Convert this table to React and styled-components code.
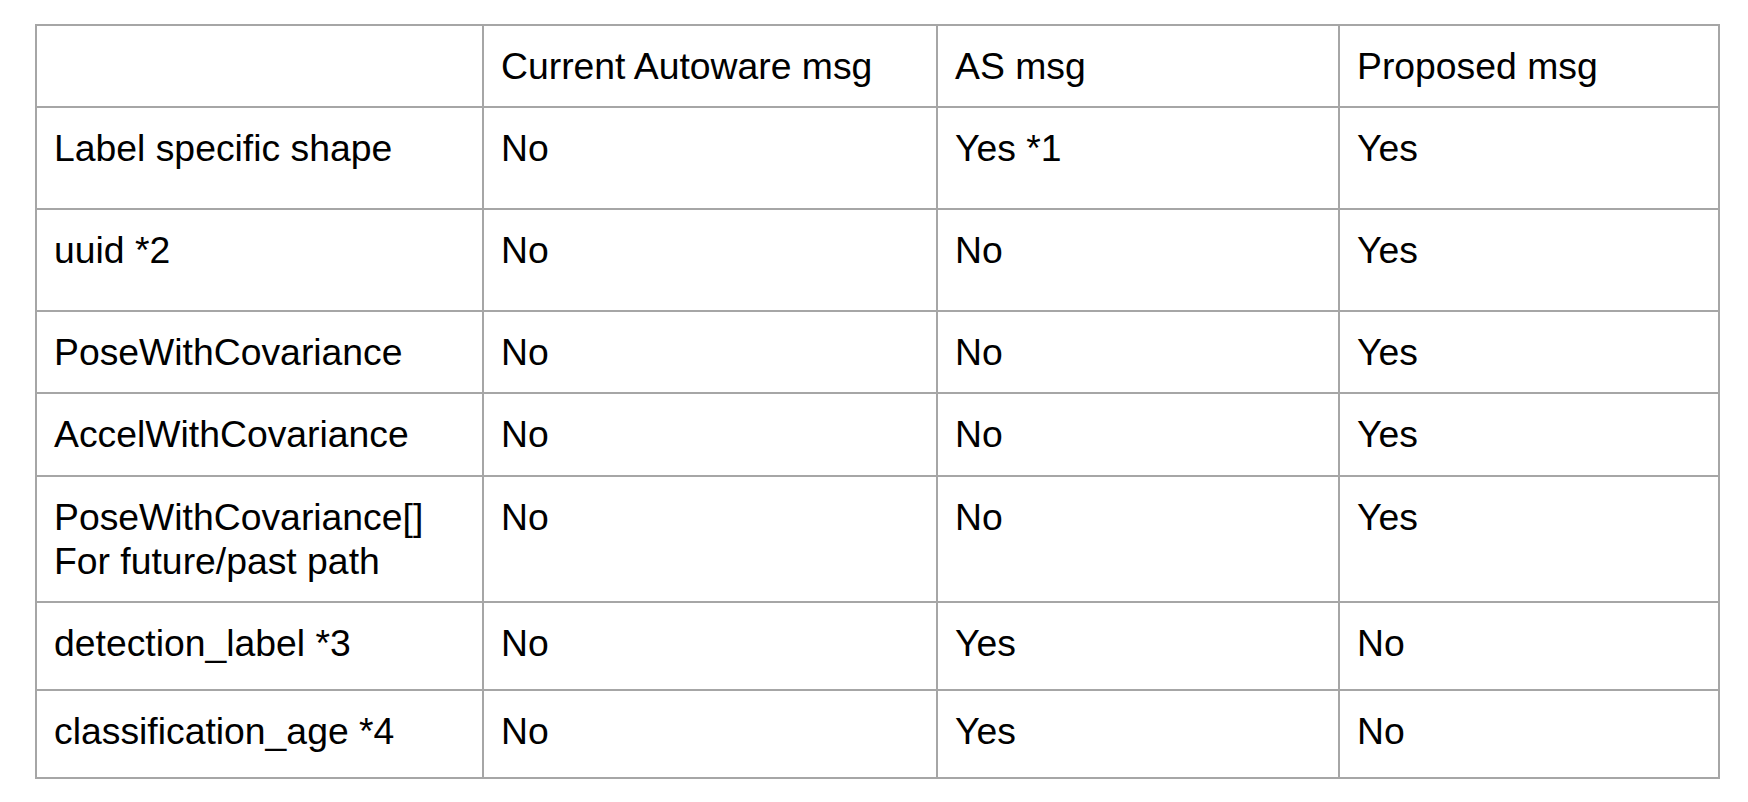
import React from "react";
import styled, { createGlobalStyle } from "styled-components";

const Global = createGlobalStyle`
  html, body { margin: 0; padding: 0; background: #ffffff; }
  body { font-family: "Liberation Sans", Arial, sans-serif; color: #000; }
`;

const Page = styled.div`
  padding: 24px 0 0 35px;
`;

const Table = styled.div`
  display: grid;
  grid-template-columns: 447px 454px 402px 380px;
  width: max-content;
  border-top: 2px solid #a6a6a6;
  border-left: 2px solid #a6a6a6;
`;

const Cell = styled.div`
  box-sizing: border-box;
  height: ${(p) => p.$h}px;
  padding: 18px 10px 0 17px;
  border-right: 2px solid #a6a6a6;
  border-bottom: 2px solid #a6a6a6;
  font-size: 37.33px;
  line-height: 44px;
  white-space: pre-line;
`;

const rows = [
  { h: 82, cells: ["", "Current Autoware msg", "AS msg", "Proposed msg"] },
  { h: 102, cells: ["Label specific shape", "No", "Yes *1", "Yes"] },
  { h: 102, cells: ["uuid *2", "No", "No", "Yes"] },
  { h: 82, cells: ["PoseWithCovariance", "No", "No", "Yes"] },
  { h: 83, cells: ["AccelWithCovariance", "No", "No", "Yes"] },
  { h: 126, cells: ["PoseWithCovariance[]\nFor future/past path", "No", "No", "Yes"] },
  { h: 88, cells: ["detection_label *3", "No", "Yes", "No"] },
  { h: 88, cells: ["classification_age *4", "No", "Yes", "No"] },
];

export default function App() {
  return (
    <Page>
      <Global />
      <Table>
        {rows.map((r, i) =>
          r.cells.map((c, j) => (
            <Cell key={`${i}-${j}`} $h={r.h}>
              {c}
            </Cell>
          ))
        )}
      </Table>
    </Page>
  );
}
